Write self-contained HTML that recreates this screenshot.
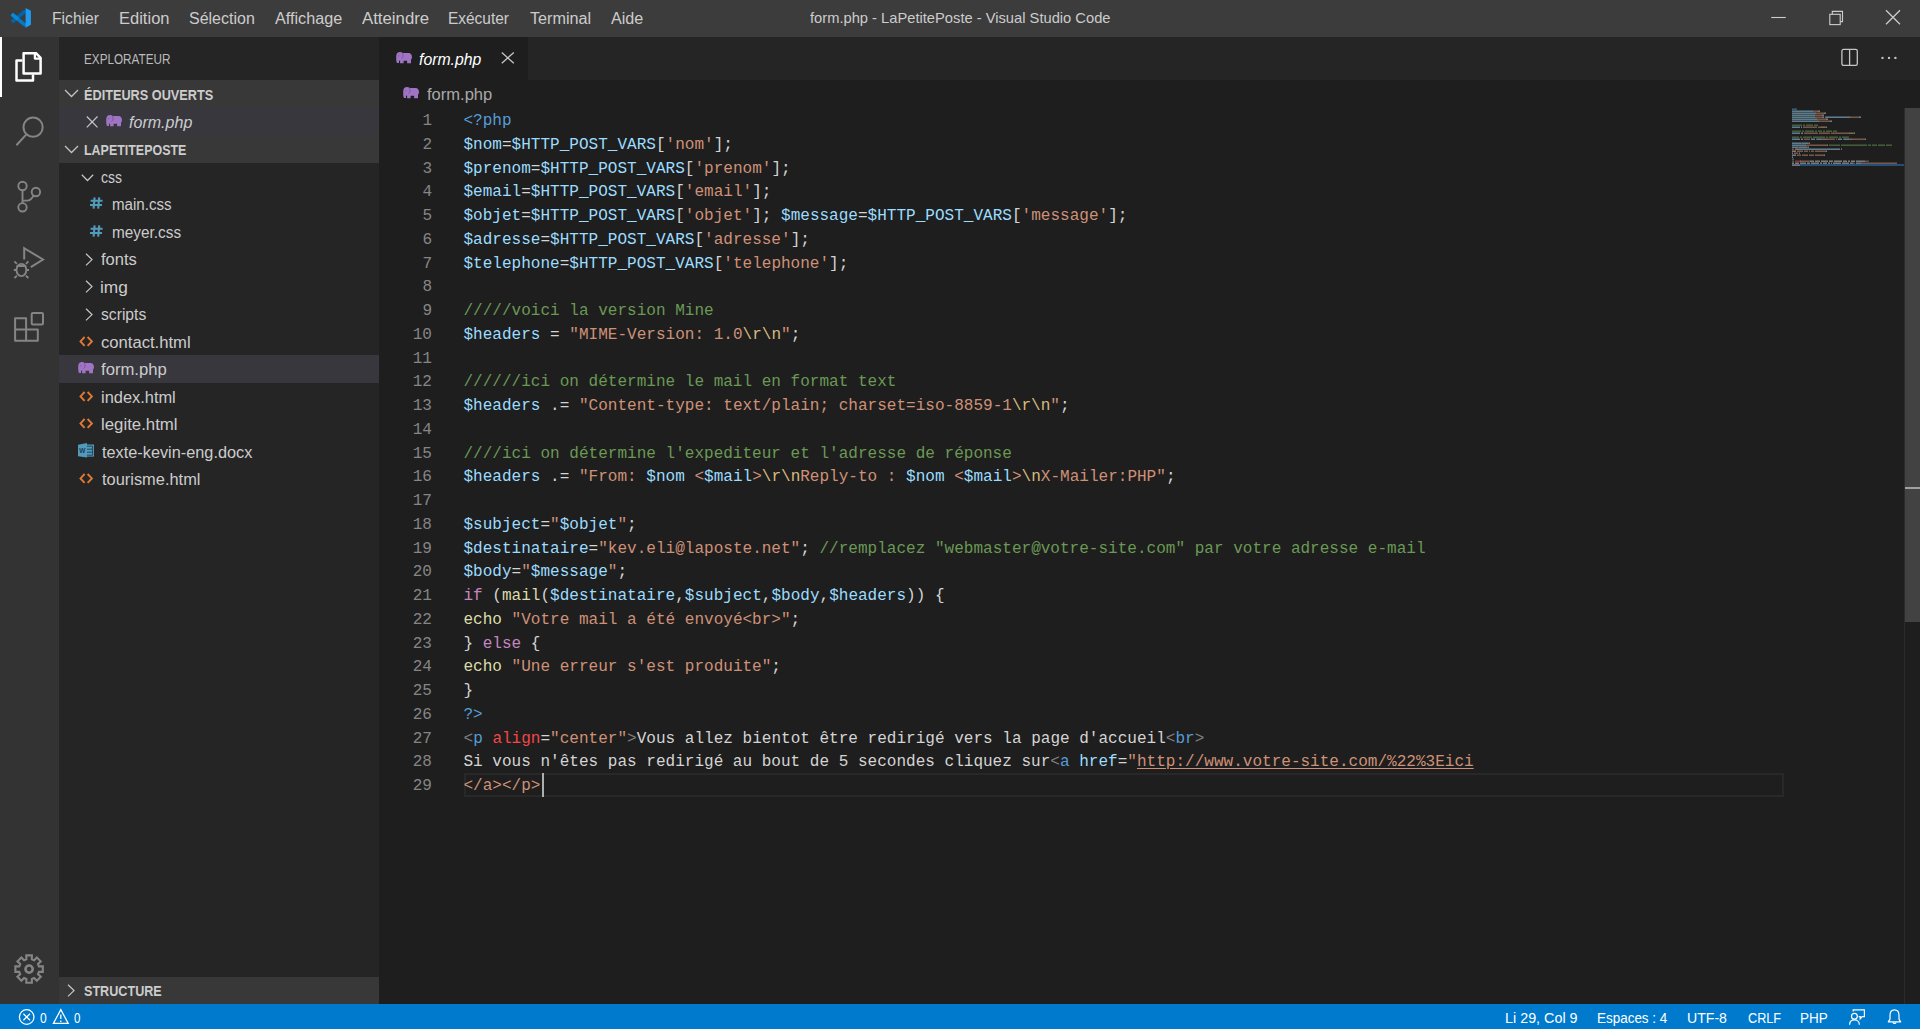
<!DOCTYPE html>
<html><head><meta charset="utf-8">
<style>
*{margin:0;padding:0;box-sizing:border-box}
html,body{width:1920px;height:1029px;overflow:hidden;background:#1e1e1e;font-family:"Liberation Sans",sans-serif}
.a{position:absolute}
.t{position:absolute;white-space:nowrap;transform-origin:0 0}
.ln{position:absolute;left:463.5px;height:23.75px;line-height:23.75px;font-family:"Liberation Mono",monospace;font-size:16.04px;white-space:pre;color:#d4d4d4}
.num{position:absolute;left:392px;width:40px;text-align:right;height:23.75px;line-height:23.75px;font-family:"Liberation Mono",monospace;font-size:16.04px;color:#858585}
</style></head><body>
<div class="a" style="left:0px;top:0px;width:1920px;height:37px;background:#3c3c3c"></div>
<div class="a" style="left:0px;top:37px;width:59px;height:967px;background:#333333"></div>
<div class="a" style="left:0px;top:37px;width:2px;height:60px;background:#ffffff"></div>
<div class="a" style="left:59px;top:37px;width:320px;height:967px;background:#252526"></div>
<div class="a" style="left:59px;top:80px;width:320px;height:27.5px;background:#383838"></div>
<div class="a" style="left:59px;top:107.5px;width:320px;height:27.5px;background:#37373d"></div>
<div class="a" style="left:59px;top:135px;width:320px;height:27.5px;background:#383838"></div>
<div class="a" style="left:59px;top:355px;width:320px;height:27.5px;background:#37373d"></div>
<div class="a" style="left:59px;top:976.5px;width:320px;height:27.5px;background:#383838"></div>
<div class="a" style="left:379px;top:37px;width:1541px;height:43px;background:#252526"></div>
<div class="a" style="left:379px;top:37px;width:149px;height:43px;background:#1e1e1e"></div>
<div class="a" style="left:0px;top:1004px;width:1920px;height:25px;background:#007acc"></div>
<div class="a" style="left:464px;top:772.75px;width:1320px;height:24.25px;border:2.5px solid #282828"></div>
<div class="a" style="left:542px;top:773px;width:2px;height:24px;background:#aeafad"></div>
<div class="a" style="left:1904px;top:108px;width:1px;height:896px;background:#2b2b2b"></div>
<div class="a" style="left:1905px;top:108px;width:15px;height:514px;background:#424242"></div>
<div class="a" style="left:1905px;top:487px;width:15px;height:2px;background:#a0a0a0"></div>
<div class="a" style="left:1792px;top:164px;width:112px;height:2px;background:#264f78"></div>
<svg class="a" style="left:0;top:0" width="40" height="37"><path d="M11.8 22 L25.6 10.9" stroke="#0065a9" stroke-width="3.6"/><path d="M11.8 14.2 L25.8 25.6" stroke="#007acc" stroke-width="3.6"/><path d="M11.8 14.2 L18 19.2" stroke="#0a8ad6" stroke-width="3.6"/><path d="M25.6 8.1 L30.9 10.8 V24.7 L25.6 27.7 Z" fill="#1f9cf0"/></svg>
<svg class="a" style="left:1760px;top:0" width="160" height="37" fill="none" stroke="#cccccc" stroke-width="1.1"><path d="M11.2 17.5 H25.8"/><rect x="69.8" y="14.3" width="10.4" height="10.3"/><path d="M72.3 14.3 V11.4 H82.5 V21.6 H80.2"/><path d="M126 10.2 L140 24.2 M140 10.2 L126 24.2" stroke-width="1.25"/></svg>
<svg class="a" style="left:0;top:0" width="59" height="360" fill="none" stroke-linejoin="round">
<path d="M23.6 53.2 H36 L40.6 57.8 V73.4 H23.6 Z" stroke="#ffffff" stroke-width="2.5"/>
<path d="M34.9 53.2 V58.6 H40.6" stroke="#ffffff" stroke-width="2.3"/>
<path d="M22.3 60.5 H16.5 V80.5 H33 V74.6" stroke="#ffffff" stroke-width="2.5"/>
<circle cx="33.1" cy="127.2" r="9.6" stroke="#858585" stroke-width="2"/>
<path d="M26.4 134.4 L16.4 145.2" stroke="#858585" stroke-width="2"/>
<circle cx="22.5" cy="186" r="4.2" stroke="#858585" stroke-width="1.9"/>
<circle cx="22.5" cy="207.3" r="4.2" stroke="#858585" stroke-width="1.9"/>
<circle cx="35.9" cy="192" r="4.2" stroke="#858585" stroke-width="1.9"/>
<path d="M22.5 190.2 V203.1 M33.5 195.6 C31.5 199.5 30 200.6 27 200.6 H22.5" stroke="#858585" stroke-width="1.9"/>
<path d="M24.2 259.5 V248.2 L43 259.5 L30.8 267.2" stroke="#858585" stroke-width="2" stroke-linejoin="miter"/>
<ellipse cx="21.4" cy="270" rx="4.9" ry="6.1" stroke="#858585" stroke-width="1.9"/>
<path d="M16.6 266 H26.2 M16.9 263.8 L14.4 261.3 M25.9 263.8 L28.4 261.3 M16.5 270 H13.8 M26.3 270 H29 M16.9 275.8 L14.4 278 M25.9 275.8 L28.4 278" stroke="#858585" stroke-width="1.8"/>
<path d="M15.1 318.2 H26.1 V329.4 H37.8 V340.7 H15.1 Z M15.1 329.4 H26.1 V340.7" stroke="#858585" stroke-width="2"/>
<rect x="31.7" y="313" width="11.3" height="11.4" rx="1.2" stroke="#858585" stroke-width="2"/>
</svg>
<svg class="a" style="left:0;top:0" width="59" height="1004" style="overflow:visible"><path d="M26.37 959.27 L26.31 955.38 L31.89 955.38 L31.83 959.27 L34.12 960.22 L36.83 957.43 L40.77 961.37 L37.98 964.08 L38.93 966.37 L42.82 966.31 L42.82 971.89 L38.93 971.83 L37.98 974.12 L40.77 976.83 L36.83 980.77 L34.12 977.98 L31.83 978.93 L31.89 982.82 L26.31 982.82 L26.37 978.93 L24.08 977.98 L21.37 980.77 L17.43 976.83 L20.22 974.12 L19.27 971.83 L15.38 971.89 L15.38 966.31 L19.27 966.37 L20.22 964.08 L17.43 961.37 L21.37 957.43 L24.08 960.22 Z" fill="none" stroke="#858585" stroke-width="2.1" stroke-linejoin="miter"/><circle cx="29.1" cy="969.1" r="3.6" fill="none" stroke="#858585" stroke-width="2.6"/></svg>
<svg class="a" style="left:64px;top:89px" width="16" height="10" viewBox="0 0 16 10"><path d="M1 1 L7.5 7.5 L14 1" stroke="#c5c5c5" stroke-width="1.25" fill="none"/></svg>
<svg class="a" style="left:85px;top:115px" width="14" height="14" viewBox="0 0 14 14"><path d="M1.8 1.5 L12.5 12.4 M12.5 1.5 L1.8 12.4" stroke="#c5c5c5" stroke-width="1.25"/></svg>
<svg class="a" style="left:105.5px;top:115.2px" width="16" height="12" viewBox="0 0 16 12"><path d="M1 11 C0.5 10 0.2 8.5 0.2 6.5 V4.2 C0.2 1.6 1.8 0 4 0 C5 0 5.8 0.3 6.4 0.8 C7.2 0.9 8 1 9 1 H12.6 C14.8 1 16 2.8 16 5 C16 6.2 15.6 7.1 15 7.6 V11.2 H11.1 V8.7 H7.6 V11.2 H4.1 V8.6 C3.6 8.5 3.2 8.7 3 9.1 V11 Z" fill="#a074c4"/><path d="M6.2 1 C7.6 2.6 7.6 5.4 5.4 6.6" stroke="#7c519c" stroke-width="0.9" fill="none"/><circle cx="2.8" cy="3.8" r="0.55" fill="#6f4a92"/></svg>
<svg class="a" style="left:64px;top:144.5px" width="16" height="10" viewBox="0 0 16 10"><path d="M1 1 L7.5 7.5 L14 1" stroke="#c5c5c5" stroke-width="1.25" fill="none"/></svg>
<svg class="a" style="left:80.5px;top:173.7px" width="16" height="10" viewBox="0 0 16 10"><path d="M0.8 0.8 L6.5 6.5 L12.2 0.8" stroke="#c5c5c5" stroke-width="1.25" fill="none"/></svg>
<svg class="a" style="left:89.8px;top:197.3px" width="14" height="14" viewBox="0 0 14 14"><path d="M4.6 0.3 L3.6 11.6 M9.2 0.3 L8.2 11.6 M0.6 3.8 H12.6 M0 8 H12" stroke="#519aba" stroke-width="2.1" fill="none"/></svg>
<svg class="a" style="left:89.8px;top:224.8px" width="14" height="14" viewBox="0 0 14 14"><path d="M4.6 0.3 L3.6 11.6 M9.2 0.3 L8.2 11.6 M0.6 3.8 H12.6 M0 8 H12" stroke="#519aba" stroke-width="2.1" fill="none"/></svg>
<svg class="a" style="left:84.5px;top:252.6px" width="10" height="16" viewBox="0 0 10 16"><path d="M1 0.8 L7 6.6 L1 12.4" stroke="#c5c5c5" stroke-width="1.25" fill="none"/></svg>
<svg class="a" style="left:84.5px;top:280.1px" width="10" height="16" viewBox="0 0 10 16"><path d="M1 0.8 L7 6.6 L1 12.4" stroke="#c5c5c5" stroke-width="1.25" fill="none"/></svg>
<svg class="a" style="left:84.5px;top:307.6px" width="10" height="16" viewBox="0 0 10 16"><path d="M1 0.8 L7 6.6 L1 12.4" stroke="#c5c5c5" stroke-width="1.25" fill="none"/></svg>
<svg class="a" style="left:79px;top:335.5px" width="16" height="14" viewBox="0 0 16 14"><path d="M5.6 1 L1.5 5.4 L5.6 9.8 M8.6 1 L12.9 5.4 L8.6 9.8" stroke="#e37933" stroke-width="1.9" fill="none"/></svg>
<svg class="a" style="left:78px;top:361.9px" width="16" height="12" viewBox="0 0 16 12"><path d="M1 11 C0.5 10 0.2 8.5 0.2 6.5 V4.2 C0.2 1.6 1.8 0 4 0 C5 0 5.8 0.3 6.4 0.8 C7.2 0.9 8 1 9 1 H12.6 C14.8 1 16 2.8 16 5 C16 6.2 15.6 7.1 15 7.6 V11.2 H11.1 V8.7 H7.6 V11.2 H4.1 V8.6 C3.6 8.5 3.2 8.7 3 9.1 V11 Z" fill="#a074c4"/><path d="M6.2 1 C7.6 2.6 7.6 5.4 5.4 6.6" stroke="#7c519c" stroke-width="0.9" fill="none"/><circle cx="2.8" cy="3.8" r="0.55" fill="#6f4a92"/></svg>
<svg class="a" style="left:79px;top:390.5px" width="16" height="14" viewBox="0 0 16 14"><path d="M5.6 1 L1.5 5.4 L5.6 9.8 M8.6 1 L12.9 5.4 L8.6 9.8" stroke="#e37933" stroke-width="1.9" fill="none"/></svg>
<svg class="a" style="left:79px;top:418.0px" width="16" height="14" viewBox="0 0 16 14"><path d="M5.6 1 L1.5 5.4 L5.6 9.8 M8.6 1 L12.9 5.4 L8.6 9.8" stroke="#e37933" stroke-width="1.9" fill="none"/></svg>
<svg class="a" style="left:78px;top:443.0px" width="17" height="16" viewBox="0 0 17 16"><rect x="9" y="1.5" width="7" height="12.1" fill="#519aba"/><path d="M9 3.2 H14.6 M9 6.2 H14.6 M9 9.2 H14.6 M9 12.2 H14.6 M14.6 3.2 V12.2" stroke="#1f3c52" stroke-width="0.9"/><path d="M0 1.7 L9 0 V14.5 L0 13.2 Z" fill="#519aba"/><text x="4.4" y="10.2" font-size="6.5" font-family="Liberation Sans" font-weight="bold" fill="#1f3c5a" text-anchor="middle">W</text></svg>
<svg class="a" style="left:79px;top:473.0px" width="16" height="14" viewBox="0 0 16 14"><path d="M5.6 1 L1.5 5.4 L5.6 9.8 M8.6 1 L12.9 5.4 L8.6 9.8" stroke="#e37933" stroke-width="1.9" fill="none"/></svg>
<svg class="a" style="left:66.6px;top:984.2px" width="10" height="16" viewBox="0 0 10 16"><path d="M1 0.8 L7 6.6 L1 12.4" stroke="#c5c5c5" stroke-width="1.25" fill="none"/></svg>
<svg class="a" style="left:395.5px;top:52.1px" width="16" height="12" viewBox="0 0 16 12"><path d="M1 11 C0.5 10 0.2 8.5 0.2 6.5 V4.2 C0.2 1.6 1.8 0 4 0 C5 0 5.8 0.3 6.4 0.8 C7.2 0.9 8 1 9 1 H12.6 C14.8 1 16 2.8 16 5 C16 6.2 15.6 7.1 15 7.6 V11.2 H11.1 V8.7 H7.6 V11.2 H4.1 V8.6 C3.6 8.5 3.2 8.7 3 9.1 V11 Z" fill="#a074c4"/><path d="M6.2 1 C7.6 2.6 7.6 5.4 5.4 6.6" stroke="#7c519c" stroke-width="0.9" fill="none"/><circle cx="2.8" cy="3.8" r="0.55" fill="#6f4a92"/></svg>
<svg class="a" style="left:500px;top:51px" width="16" height="14" viewBox="0 0 16 14"><path d="M1.8 1.5 L13.8 12.3 M13.8 1.5 L1.8 12.3" stroke="#c5c5c5" stroke-width="1.3"/></svg>
<svg class="a" style="left:1838px;top:46px" width="24" height="24" viewBox="0 0 24 24"><rect x="3.9" y="3.4" width="15.4" height="16" rx="1.6" fill="none" stroke="#c5c5c5" stroke-width="1.3"/><path d="M11.6 3.4 V19.4" stroke="#c5c5c5" stroke-width="1.3"/></svg>
<svg class="a" style="left:1878px;top:52px" width="22" height="12"><circle cx="4.5" cy="5.9" r="1.2" fill="#c5c5c5"/><circle cx="11" cy="5.9" r="1.2" fill="#c5c5c5"/><circle cx="17.4" cy="5.9" r="1.2" fill="#c5c5c5"/></svg>
<svg class="a" style="left:403px;top:87.3px" width="16" height="12" viewBox="0 0 16 12"><path d="M1 11 C0.5 10 0.2 8.5 0.2 6.5 V4.2 C0.2 1.6 1.8 0 4 0 C5 0 5.8 0.3 6.4 0.8 C7.2 0.9 8 1 9 1 H12.6 C14.8 1 16 2.8 16 5 C16 6.2 15.6 7.1 15 7.6 V11.2 H11.1 V8.7 H7.6 V11.2 H4.1 V8.6 C3.6 8.5 3.2 8.7 3 9.1 V11 Z" fill="#a074c4"/><path d="M6.2 1 C7.6 2.6 7.6 5.4 5.4 6.6" stroke="#7c519c" stroke-width="0.9" fill="none"/><circle cx="2.8" cy="3.8" r="0.55" fill="#6f4a92"/></svg>
<svg class="a" style="left:0;top:1004px" width="90" height="25" fill="none" stroke="#fff" stroke-width="1.25"><circle cx="26.7" cy="13" r="7.3"/><path d="M23.4 9.7 L30 16.3 M30 9.7 L23.4 16.3"/><path d="M60.8 5.6 L68.2 19.4 H53.4 Z" stroke-linejoin="miter"/><path d="M60.8 10.4 V15 M60.8 16.4 V18" stroke-width="1.3"/></svg>
<svg class="a" style="left:1840px;top:1004px" width="70" height="25" fill="none" stroke="#fff" stroke-width="1.2"><path d="M13.2 7.6 V5.8 H24.4 V12.6 H22.1 L20.2 14.8 V12.6 H18.6"/><circle cx="14.4" cy="12.2" r="2.9"/><path d="M9.6 20.8 C9.6 17.6 11.8 15.9 14.4 15.9 C17 15.9 19.4 17.6 19.4 20.8"/><path d="M54.5 5.8 C51.2 5.8 50 8.5 50 11.5 V15.2 L48.3 17.8 H60.7 L59 15.2 V11.5 C59 8.5 57.8 5.8 54.5 5.8 Z" stroke-linejoin="round"/><path d="M53 18.4 C53.2 19.8 55.8 19.8 56 18.4"/></svg>
<div class="t" style="left:51.90px;top:0.00px;height:37px;line-height:37px;font-size:15.8px;font-weight:400;color:#cccccc;transform:scaleX(0.9919)">Fichier</div>
<div class="t" style="left:119.10px;top:0.00px;height:37px;line-height:37px;font-size:15.8px;font-weight:400;color:#cccccc;transform:scaleX(1.0454)">Edition</div>
<div class="t" style="left:188.90px;top:0.00px;height:37px;line-height:37px;font-size:15.8px;font-weight:400;color:#cccccc;transform:scaleX(1.0125)">Sélection</div>
<div class="t" style="left:274.90px;top:0.00px;height:37px;line-height:37px;font-size:15.8px;font-weight:400;color:#cccccc;transform:scaleX(1.0260)">Affichage</div>
<div class="t" style="left:361.90px;top:0.00px;height:37px;line-height:37px;font-size:15.8px;font-weight:400;color:#cccccc;transform:scaleX(1.0615)">Atteindre</div>
<div class="t" style="left:448.30px;top:0.00px;height:37px;line-height:37px;font-size:15.8px;font-weight:400;color:#cccccc;transform:scaleX(0.9776)">Exécuter</div>
<div class="t" style="left:530.30px;top:0.00px;height:37px;line-height:37px;font-size:15.8px;font-weight:400;color:#cccccc;transform:scaleX(1.0247)">Terminal</div>
<div class="t" style="left:611.30px;top:0.00px;height:37px;line-height:37px;font-size:15.8px;font-weight:400;color:#cccccc;transform:scaleX(1.0227)">Aide</div>
<div class="t" style="left:809.50px;top:0.00px;height:37px;line-height:37px;font-size:14.8px;font-weight:400;color:#cccccc;transform:scaleX(0.9937)">form.php - LaPetitePoste - Visual Studio Code</div>
<div class="t" style="left:84.30px;top:38.00px;height:43px;line-height:43px;font-size:13.75px;font-weight:400;color:#bbbbbb;transform:scaleX(0.8522)">EXPLORATEUR</div>
<div class="t" style="left:84.30px;top:82.00px;height:27.5px;line-height:27.5px;font-size:13.75px;font-weight:700;color:#cccccc;transform:scaleX(0.9245)">ÉDITEURS OUVERTS</div>
<div class="t" style="left:128.90px;top:108.50px;height:27.5px;line-height:27.5px;font-size:15.8px;font-weight:400;color:#cccccc;transform:scaleX(1.0161);font-style:italic">form.php</div>
<div class="t" style="left:84.30px;top:137.00px;height:27.5px;line-height:27.5px;font-size:13.75px;font-weight:700;color:#cccccc;transform:scaleX(0.9050)">LAPETITEPOSTE</div>
<div class="t" style="left:101.30px;top:163.50px;height:27.5px;line-height:27.5px;font-size:15.8px;font-weight:400;color:#cccccc;transform:scaleX(0.8843)">css</div>
<div class="t" style="left:111.70px;top:191.00px;height:27.5px;line-height:27.5px;font-size:15.8px;font-weight:400;color:#cccccc;transform:scaleX(0.9567)">main.css</div>
<div class="t" style="left:111.70px;top:218.50px;height:27.5px;line-height:27.5px;font-size:15.8px;font-weight:400;color:#cccccc;transform:scaleX(0.9716)">meyer.css</div>
<div class="t" style="left:101.30px;top:246.00px;height:27.5px;line-height:27.5px;font-size:15.8px;font-weight:400;color:#cccccc;transform:scaleX(1.0471)">fonts</div>
<div class="t" style="left:100.30px;top:273.50px;height:27.5px;line-height:27.5px;font-size:15.8px;font-weight:400;color:#cccccc;transform:scaleX(1.0937)">img</div>
<div class="t" style="left:101.30px;top:301.00px;height:27.5px;line-height:27.5px;font-size:15.8px;font-weight:400;color:#cccccc;transform:scaleX(0.9919)">scripts</div>
<div class="t" style="left:101.30px;top:328.50px;height:27.5px;line-height:27.5px;font-size:15.8px;font-weight:400;color:#cccccc;transform:scaleX(1.0526)">contact.html</div>
<div class="t" style="left:101.30px;top:356.00px;height:27.5px;line-height:27.5px;font-size:15.8px;font-weight:400;color:#cccccc;transform:scaleX(1.0544)">form.php</div>
<div class="t" style="left:101.30px;top:383.50px;height:27.5px;line-height:27.5px;font-size:15.8px;font-weight:400;color:#cccccc;transform:scaleX(1.0382)">index.html</div>
<div class="t" style="left:101.30px;top:411.00px;height:27.5px;line-height:27.5px;font-size:15.8px;font-weight:400;color:#cccccc;transform:scaleX(1.0634)">legite.html</div>
<div class="t" style="left:102.10px;top:438.50px;height:27.5px;line-height:27.5px;font-size:15.8px;font-weight:400;color:#cccccc;transform:scaleX(1.0313)">texte-kevin-eng.docx</div>
<div class="t" style="left:102.10px;top:466.00px;height:27.5px;line-height:27.5px;font-size:15.8px;font-weight:400;color:#cccccc;transform:scaleX(1.0385)">tourisme.html</div>
<div class="t" style="left:83.50px;top:978.00px;height:27.5px;line-height:27.5px;font-size:13.75px;font-weight:700;color:#cccccc;transform:scaleX(0.9172)">STRUCTURE</div>
<div class="t" style="left:418.90px;top:38.00px;height:43px;line-height:43px;font-size:15.8px;font-weight:400;color:#ffffff;transform:scaleX(1.0002);font-style:italic">form.php</div>
<div class="t" style="left:426.90px;top:81.00px;height:28px;line-height:28px;font-size:15.8px;font-weight:400;color:#a9a9a9;transform:scaleX(1.0468)">form.php</div>
<div class="t" style="left:39.50px;top:1004.80px;height:25px;line-height:25px;font-size:15.2px;font-weight:400;color:#ffffff;transform:scaleX(0.7894)">0</div>
<div class="t" style="left:73.50px;top:1004.80px;height:25px;line-height:25px;font-size:15.2px;font-weight:400;color:#ffffff;transform:scaleX(0.7556)">0</div>
<div class="t" style="left:1504.90px;top:1004.80px;height:25px;line-height:25px;font-size:15.2px;font-weight:400;color:#ffffff;transform:scaleX(0.9444)">Li 29, Col 9</div>
<div class="t" style="left:1596.50px;top:1004.80px;height:25px;line-height:25px;font-size:15.2px;font-weight:400;color:#ffffff;transform:scaleX(0.8858)">Espaces : 4</div>
<div class="t" style="left:1686.50px;top:1004.80px;height:25px;line-height:25px;font-size:15.2px;font-weight:400;color:#ffffff;transform:scaleX(0.9289)">UTF-8</div>
<div class="t" style="left:1747.50px;top:1004.80px;height:25px;line-height:25px;font-size:15.2px;font-weight:400;color:#ffffff;transform:scaleX(0.8351)">CRLF</div>
<div class="t" style="left:1799.50px;top:1004.80px;height:25px;line-height:25px;font-size:15.2px;font-weight:400;color:#ffffff;transform:scaleX(0.8882)">PHP</div>
<div class="num" style="top:110.00px">1</div>
<div class="num" style="top:133.75px">2</div>
<div class="num" style="top:157.50px">3</div>
<div class="num" style="top:181.25px">4</div>
<div class="num" style="top:205.00px">5</div>
<div class="num" style="top:228.75px">6</div>
<div class="num" style="top:252.50px">7</div>
<div class="num" style="top:276.25px">8</div>
<div class="num" style="top:300.00px">9</div>
<div class="num" style="top:323.75px">10</div>
<div class="num" style="top:347.50px">11</div>
<div class="num" style="top:371.25px">12</div>
<div class="num" style="top:395.00px">13</div>
<div class="num" style="top:418.75px">14</div>
<div class="num" style="top:442.50px">15</div>
<div class="num" style="top:466.25px">16</div>
<div class="num" style="top:490.00px">17</div>
<div class="num" style="top:513.75px">18</div>
<div class="num" style="top:537.50px">19</div>
<div class="num" style="top:561.25px">20</div>
<div class="num" style="top:585.00px">21</div>
<div class="num" style="top:608.75px">22</div>
<div class="num" style="top:632.50px">23</div>
<div class="num" style="top:656.25px">24</div>
<div class="num" style="top:680.00px">25</div>
<div class="num" style="top:703.75px">26</div>
<div class="num" style="top:727.50px">27</div>
<div class="num" style="top:751.25px">28</div>
<div class="num" style="top:775.00px">29</div>
<div class="ln" style="top:110.00px"><span style="color:#569cd6">&lt;?php</span></div>
<div class="ln" style="top:133.75px"><span style="color:#9cdcfe">$nom</span><span style="color:#d4d4d4">=</span><span style="color:#9cdcfe">$HTTP_POST_VARS</span><span style="color:#d4d4d4">[</span><span style="color:#ce9178">&#x27;nom&#x27;</span><span style="color:#d4d4d4">];</span></div>
<div class="ln" style="top:157.50px"><span style="color:#9cdcfe">$prenom</span><span style="color:#d4d4d4">=</span><span style="color:#9cdcfe">$HTTP_POST_VARS</span><span style="color:#d4d4d4">[</span><span style="color:#ce9178">&#x27;prenom&#x27;</span><span style="color:#d4d4d4">];</span></div>
<div class="ln" style="top:181.25px"><span style="color:#9cdcfe">$email</span><span style="color:#d4d4d4">=</span><span style="color:#9cdcfe">$HTTP_POST_VARS</span><span style="color:#d4d4d4">[</span><span style="color:#ce9178">&#x27;email&#x27;</span><span style="color:#d4d4d4">];</span></div>
<div class="ln" style="top:205.00px"><span style="color:#9cdcfe">$objet</span><span style="color:#d4d4d4">=</span><span style="color:#9cdcfe">$HTTP_POST_VARS</span><span style="color:#d4d4d4">[</span><span style="color:#ce9178">&#x27;objet&#x27;</span><span style="color:#d4d4d4">];</span><span style="color:#d4d4d4"> </span><span style="color:#9cdcfe">$message</span><span style="color:#d4d4d4">=</span><span style="color:#9cdcfe">$HTTP_POST_VARS</span><span style="color:#d4d4d4">[</span><span style="color:#ce9178">&#x27;message&#x27;</span><span style="color:#d4d4d4">];</span></div>
<div class="ln" style="top:228.75px"><span style="color:#9cdcfe">$adresse</span><span style="color:#d4d4d4">=</span><span style="color:#9cdcfe">$HTTP_POST_VARS</span><span style="color:#d4d4d4">[</span><span style="color:#ce9178">&#x27;adresse&#x27;</span><span style="color:#d4d4d4">];</span></div>
<div class="ln" style="top:252.50px"><span style="color:#9cdcfe">$telephone</span><span style="color:#d4d4d4">=</span><span style="color:#9cdcfe">$HTTP_POST_VARS</span><span style="color:#d4d4d4">[</span><span style="color:#ce9178">&#x27;telephone&#x27;</span><span style="color:#d4d4d4">];</span></div>
<div class="ln" style="top:276.25px"></div>
<div class="ln" style="top:300.00px"><span style="color:#6a9955">/////voici la version Mine</span></div>
<div class="ln" style="top:323.75px"><span style="color:#9cdcfe">$headers</span><span style="color:#d4d4d4"> = </span><span style="color:#ce9178">&quot;MIME-Version: 1.0</span><span style="color:#d7ba7d">\r\n</span><span style="color:#ce9178">&quot;</span><span style="color:#d4d4d4">;</span></div>
<div class="ln" style="top:347.50px"></div>
<div class="ln" style="top:371.25px"><span style="color:#6a9955">//////ici on détermine le mail en format text</span></div>
<div class="ln" style="top:395.00px"><span style="color:#9cdcfe">$headers</span><span style="color:#d4d4d4"> .= </span><span style="color:#ce9178">&quot;Content-type: text/plain; charset=iso-8859-1</span><span style="color:#d7ba7d">\r\n</span><span style="color:#ce9178">&quot;</span><span style="color:#d4d4d4">;</span></div>
<div class="ln" style="top:418.75px"></div>
<div class="ln" style="top:442.50px"><span style="color:#6a9955">////ici on détermine l&#x27;expediteur et l&#x27;adresse de réponse</span></div>
<div class="ln" style="top:466.25px"><span style="color:#9cdcfe">$headers</span><span style="color:#d4d4d4"> .= </span><span style="color:#ce9178">&quot;From: </span><span style="color:#9cdcfe">$nom</span><span style="color:#ce9178"> &lt;</span><span style="color:#9cdcfe">$mail</span><span style="color:#ce9178">&gt;</span><span style="color:#d7ba7d">\r\n</span><span style="color:#ce9178">Reply-to : </span><span style="color:#9cdcfe">$nom</span><span style="color:#ce9178"> &lt;</span><span style="color:#9cdcfe">$mail</span><span style="color:#ce9178">&gt;</span><span style="color:#d7ba7d">\n</span><span style="color:#ce9178">X-Mailer:PHP&quot;</span><span style="color:#d4d4d4">;</span></div>
<div class="ln" style="top:490.00px"></div>
<div class="ln" style="top:513.75px"><span style="color:#9cdcfe">$subject</span><span style="color:#d4d4d4">=</span><span style="color:#ce9178">&quot;</span><span style="color:#9cdcfe">$objet</span><span style="color:#ce9178">&quot;</span><span style="color:#d4d4d4">;</span></div>
<div class="ln" style="top:537.50px"><span style="color:#9cdcfe">$destinataire</span><span style="color:#d4d4d4">=</span><span style="color:#ce9178">&quot;kev.eli@laposte.net&quot;</span><span style="color:#d4d4d4">; </span><span style="color:#6a9955">//remplacez &quot;webmaster@votre-site.com&quot; par votre adresse e-mail</span></div>
<div class="ln" style="top:561.25px"><span style="color:#9cdcfe">$body</span><span style="color:#d4d4d4">=</span><span style="color:#ce9178">&quot;</span><span style="color:#9cdcfe">$message</span><span style="color:#ce9178">&quot;</span><span style="color:#d4d4d4">;</span></div>
<div class="ln" style="top:585.00px"><span style="color:#c586c0">if</span><span style="color:#d4d4d4"> (</span><span style="color:#dcdcaa">mail</span><span style="color:#d4d4d4">(</span><span style="color:#9cdcfe">$destinataire</span><span style="color:#d4d4d4">,</span><span style="color:#9cdcfe">$subject</span><span style="color:#d4d4d4">,</span><span style="color:#9cdcfe">$body</span><span style="color:#d4d4d4">,</span><span style="color:#9cdcfe">$headers</span><span style="color:#d4d4d4">)) {</span></div>
<div class="ln" style="top:608.75px"><span style="color:#dcdcaa">echo</span><span style="color:#d4d4d4"> </span><span style="color:#ce9178">&quot;Votre mail a été envoyé&lt;br&gt;&quot;</span><span style="color:#d4d4d4">;</span></div>
<div class="ln" style="top:632.50px"><span style="color:#d4d4d4">} </span><span style="color:#c586c0">else</span><span style="color:#d4d4d4"> {</span></div>
<div class="ln" style="top:656.25px"><span style="color:#dcdcaa">echo</span><span style="color:#d4d4d4"> </span><span style="color:#ce9178">&quot;Une erreur s&#x27;est produite&quot;</span><span style="color:#d4d4d4">;</span></div>
<div class="ln" style="top:680.00px"><span style="color:#d4d4d4">}</span></div>
<div class="ln" style="top:703.75px"><span style="color:#569cd6">?&gt;</span></div>
<div class="ln" style="top:727.50px"><span style="color:#808080">&lt;</span><span style="color:#569cd6">p</span><span style="color:#d4d4d4"> </span><span style="color:#f44747">align</span><span style="color:#d4d4d4">=</span><span style="color:#ce9178">&quot;center&quot;</span><span style="color:#808080">&gt;</span><span style="color:#d4d4d4">Vous allez bientot être redirigé vers la page d&#x27;accueil</span><span style="color:#808080">&lt;</span><span style="color:#569cd6">br</span><span style="color:#808080">&gt;</span></div>
<div class="ln" style="top:751.25px"><span style="color:#d4d4d4">Si vous n&#x27;êtes pas redirigé au bout de 5 secondes cliquez sur</span><span style="color:#808080">&lt;</span><span style="color:#569cd6">a</span><span style="color:#d4d4d4"> </span><span style="color:#9cdcfe">href</span><span style="color:#d4d4d4">=</span><span style="color:#ce9178">&quot;</span><span style="color:#ce9178;text-decoration:underline;text-underline-offset:2px">http://www.votre-site.com/%22%3Eici</span></div>
<div class="ln" style="top:775.00px"><span style="color:#ce9178">&lt;/a&gt;&lt;/p&gt;</span></div>
<svg class="a" style="left:1792px;top:108px" width="112" height="60" shape-rendering="crispEdges"><rect x="0" y="0" width="5" height="1" fill="#569cd6" fill-opacity="0.28"/><rect x="0" y="1" width="5" height="1" fill="#569cd6" fill-opacity="0.5"/><rect x="0" y="2" width="4" height="1" fill="#9cdcfe" fill-opacity="0.28"/><rect x="0" y="3" width="4" height="1" fill="#9cdcfe" fill-opacity="0.5"/><rect x="4" y="2" width="1" height="1" fill="#d4d4d4" fill-opacity="0.28"/><rect x="4" y="3" width="1" height="1" fill="#d4d4d4" fill-opacity="0.5"/><rect x="5" y="2" width="15" height="1" fill="#9cdcfe" fill-opacity="0.28"/><rect x="5" y="3" width="15" height="1" fill="#9cdcfe" fill-opacity="0.5"/><rect x="20" y="2" width="1" height="1" fill="#d4d4d4" fill-opacity="0.28"/><rect x="20" y="3" width="1" height="1" fill="#d4d4d4" fill-opacity="0.5"/><rect x="21" y="2" width="5" height="1" fill="#ce9178" fill-opacity="0.28"/><rect x="21" y="3" width="5" height="1" fill="#ce9178" fill-opacity="0.5"/><rect x="26" y="2" width="2" height="1" fill="#d4d4d4" fill-opacity="0.28"/><rect x="26" y="3" width="2" height="1" fill="#d4d4d4" fill-opacity="0.5"/><rect x="0" y="4" width="7" height="1" fill="#9cdcfe" fill-opacity="0.28"/><rect x="0" y="5" width="7" height="1" fill="#9cdcfe" fill-opacity="0.5"/><rect x="7" y="4" width="1" height="1" fill="#d4d4d4" fill-opacity="0.28"/><rect x="7" y="5" width="1" height="1" fill="#d4d4d4" fill-opacity="0.5"/><rect x="8" y="4" width="15" height="1" fill="#9cdcfe" fill-opacity="0.28"/><rect x="8" y="5" width="15" height="1" fill="#9cdcfe" fill-opacity="0.5"/><rect x="23" y="4" width="1" height="1" fill="#d4d4d4" fill-opacity="0.28"/><rect x="23" y="5" width="1" height="1" fill="#d4d4d4" fill-opacity="0.5"/><rect x="24" y="4" width="8" height="1" fill="#ce9178" fill-opacity="0.28"/><rect x="24" y="5" width="8" height="1" fill="#ce9178" fill-opacity="0.5"/><rect x="32" y="4" width="2" height="1" fill="#d4d4d4" fill-opacity="0.28"/><rect x="32" y="5" width="2" height="1" fill="#d4d4d4" fill-opacity="0.5"/><rect x="0" y="6" width="6" height="1" fill="#9cdcfe" fill-opacity="0.28"/><rect x="0" y="7" width="6" height="1" fill="#9cdcfe" fill-opacity="0.5"/><rect x="6" y="6" width="1" height="1" fill="#d4d4d4" fill-opacity="0.28"/><rect x="6" y="7" width="1" height="1" fill="#d4d4d4" fill-opacity="0.5"/><rect x="7" y="6" width="15" height="1" fill="#9cdcfe" fill-opacity="0.28"/><rect x="7" y="7" width="15" height="1" fill="#9cdcfe" fill-opacity="0.5"/><rect x="22" y="6" width="1" height="1" fill="#d4d4d4" fill-opacity="0.28"/><rect x="22" y="7" width="1" height="1" fill="#d4d4d4" fill-opacity="0.5"/><rect x="23" y="6" width="7" height="1" fill="#ce9178" fill-opacity="0.28"/><rect x="23" y="7" width="7" height="1" fill="#ce9178" fill-opacity="0.5"/><rect x="30" y="6" width="2" height="1" fill="#d4d4d4" fill-opacity="0.28"/><rect x="30" y="7" width="2" height="1" fill="#d4d4d4" fill-opacity="0.5"/><rect x="0" y="8" width="6" height="1" fill="#9cdcfe" fill-opacity="0.28"/><rect x="0" y="9" width="6" height="1" fill="#9cdcfe" fill-opacity="0.5"/><rect x="6" y="8" width="1" height="1" fill="#d4d4d4" fill-opacity="0.28"/><rect x="6" y="9" width="1" height="1" fill="#d4d4d4" fill-opacity="0.5"/><rect x="7" y="8" width="15" height="1" fill="#9cdcfe" fill-opacity="0.28"/><rect x="7" y="9" width="15" height="1" fill="#9cdcfe" fill-opacity="0.5"/><rect x="22" y="8" width="1" height="1" fill="#d4d4d4" fill-opacity="0.28"/><rect x="22" y="9" width="1" height="1" fill="#d4d4d4" fill-opacity="0.5"/><rect x="23" y="8" width="7" height="1" fill="#ce9178" fill-opacity="0.28"/><rect x="23" y="9" width="7" height="1" fill="#ce9178" fill-opacity="0.5"/><rect x="30" y="8" width="2" height="1" fill="#d4d4d4" fill-opacity="0.28"/><rect x="30" y="9" width="2" height="1" fill="#d4d4d4" fill-opacity="0.5"/><rect x="33" y="8" width="8" height="1" fill="#9cdcfe" fill-opacity="0.28"/><rect x="33" y="9" width="8" height="1" fill="#9cdcfe" fill-opacity="0.5"/><rect x="41" y="8" width="1" height="1" fill="#d4d4d4" fill-opacity="0.28"/><rect x="41" y="9" width="1" height="1" fill="#d4d4d4" fill-opacity="0.5"/><rect x="42" y="8" width="15" height="1" fill="#9cdcfe" fill-opacity="0.28"/><rect x="42" y="9" width="15" height="1" fill="#9cdcfe" fill-opacity="0.5"/><rect x="57" y="8" width="1" height="1" fill="#d4d4d4" fill-opacity="0.28"/><rect x="57" y="9" width="1" height="1" fill="#d4d4d4" fill-opacity="0.5"/><rect x="58" y="8" width="9" height="1" fill="#ce9178" fill-opacity="0.28"/><rect x="58" y="9" width="9" height="1" fill="#ce9178" fill-opacity="0.5"/><rect x="67" y="8" width="2" height="1" fill="#d4d4d4" fill-opacity="0.28"/><rect x="67" y="9" width="2" height="1" fill="#d4d4d4" fill-opacity="0.5"/><rect x="0" y="10" width="8" height="1" fill="#9cdcfe" fill-opacity="0.28"/><rect x="0" y="11" width="8" height="1" fill="#9cdcfe" fill-opacity="0.5"/><rect x="8" y="10" width="1" height="1" fill="#d4d4d4" fill-opacity="0.28"/><rect x="8" y="11" width="1" height="1" fill="#d4d4d4" fill-opacity="0.5"/><rect x="9" y="10" width="15" height="1" fill="#9cdcfe" fill-opacity="0.28"/><rect x="9" y="11" width="15" height="1" fill="#9cdcfe" fill-opacity="0.5"/><rect x="24" y="10" width="1" height="1" fill="#d4d4d4" fill-opacity="0.28"/><rect x="24" y="11" width="1" height="1" fill="#d4d4d4" fill-opacity="0.5"/><rect x="25" y="10" width="9" height="1" fill="#ce9178" fill-opacity="0.28"/><rect x="25" y="11" width="9" height="1" fill="#ce9178" fill-opacity="0.5"/><rect x="34" y="10" width="2" height="1" fill="#d4d4d4" fill-opacity="0.28"/><rect x="34" y="11" width="2" height="1" fill="#d4d4d4" fill-opacity="0.5"/><rect x="0" y="12" width="10" height="1" fill="#9cdcfe" fill-opacity="0.28"/><rect x="0" y="13" width="10" height="1" fill="#9cdcfe" fill-opacity="0.5"/><rect x="10" y="12" width="1" height="1" fill="#d4d4d4" fill-opacity="0.28"/><rect x="10" y="13" width="1" height="1" fill="#d4d4d4" fill-opacity="0.5"/><rect x="11" y="12" width="15" height="1" fill="#9cdcfe" fill-opacity="0.28"/><rect x="11" y="13" width="15" height="1" fill="#9cdcfe" fill-opacity="0.5"/><rect x="26" y="12" width="1" height="1" fill="#d4d4d4" fill-opacity="0.28"/><rect x="26" y="13" width="1" height="1" fill="#d4d4d4" fill-opacity="0.5"/><rect x="27" y="12" width="11" height="1" fill="#ce9178" fill-opacity="0.28"/><rect x="27" y="13" width="11" height="1" fill="#ce9178" fill-opacity="0.5"/><rect x="38" y="12" width="2" height="1" fill="#d4d4d4" fill-opacity="0.28"/><rect x="38" y="13" width="2" height="1" fill="#d4d4d4" fill-opacity="0.5"/><rect x="0" y="16" width="10" height="1" fill="#6a9955" fill-opacity="0.28"/><rect x="0" y="17" width="10" height="1" fill="#6a9955" fill-opacity="0.5"/><rect x="11" y="16" width="2" height="1" fill="#6a9955" fill-opacity="0.28"/><rect x="11" y="17" width="2" height="1" fill="#6a9955" fill-opacity="0.5"/><rect x="14" y="16" width="7" height="1" fill="#6a9955" fill-opacity="0.28"/><rect x="14" y="17" width="7" height="1" fill="#6a9955" fill-opacity="0.5"/><rect x="22" y="16" width="4" height="1" fill="#6a9955" fill-opacity="0.28"/><rect x="22" y="17" width="4" height="1" fill="#6a9955" fill-opacity="0.5"/><rect x="0" y="18" width="8" height="1" fill="#9cdcfe" fill-opacity="0.28"/><rect x="0" y="19" width="8" height="1" fill="#9cdcfe" fill-opacity="0.5"/><rect x="9" y="18" width="1" height="1" fill="#d4d4d4" fill-opacity="0.28"/><rect x="9" y="19" width="1" height="1" fill="#d4d4d4" fill-opacity="0.5"/><rect x="11" y="18" width="14" height="1" fill="#ce9178" fill-opacity="0.28"/><rect x="11" y="19" width="14" height="1" fill="#ce9178" fill-opacity="0.5"/><rect x="26" y="18" width="3" height="1" fill="#ce9178" fill-opacity="0.28"/><rect x="26" y="19" width="3" height="1" fill="#ce9178" fill-opacity="0.5"/><rect x="29" y="18" width="4" height="1" fill="#d7ba7d" fill-opacity="0.28"/><rect x="29" y="19" width="4" height="1" fill="#d7ba7d" fill-opacity="0.5"/><rect x="33" y="18" width="1" height="1" fill="#ce9178" fill-opacity="0.28"/><rect x="33" y="19" width="1" height="1" fill="#ce9178" fill-opacity="0.5"/><rect x="34" y="18" width="1" height="1" fill="#d4d4d4" fill-opacity="0.28"/><rect x="34" y="19" width="1" height="1" fill="#d4d4d4" fill-opacity="0.5"/><rect x="0" y="22" width="9" height="1" fill="#6a9955" fill-opacity="0.28"/><rect x="0" y="23" width="9" height="1" fill="#6a9955" fill-opacity="0.5"/><rect x="10" y="22" width="2" height="1" fill="#6a9955" fill-opacity="0.28"/><rect x="10" y="23" width="2" height="1" fill="#6a9955" fill-opacity="0.5"/><rect x="13" y="22" width="9" height="1" fill="#6a9955" fill-opacity="0.28"/><rect x="13" y="23" width="9" height="1" fill="#6a9955" fill-opacity="0.5"/><rect x="23" y="22" width="2" height="1" fill="#6a9955" fill-opacity="0.28"/><rect x="23" y="23" width="2" height="1" fill="#6a9955" fill-opacity="0.5"/><rect x="26" y="22" width="4" height="1" fill="#6a9955" fill-opacity="0.28"/><rect x="26" y="23" width="4" height="1" fill="#6a9955" fill-opacity="0.5"/><rect x="31" y="22" width="2" height="1" fill="#6a9955" fill-opacity="0.28"/><rect x="31" y="23" width="2" height="1" fill="#6a9955" fill-opacity="0.5"/><rect x="34" y="22" width="6" height="1" fill="#6a9955" fill-opacity="0.28"/><rect x="34" y="23" width="6" height="1" fill="#6a9955" fill-opacity="0.5"/><rect x="41" y="22" width="4" height="1" fill="#6a9955" fill-opacity="0.28"/><rect x="41" y="23" width="4" height="1" fill="#6a9955" fill-opacity="0.5"/><rect x="0" y="24" width="8" height="1" fill="#9cdcfe" fill-opacity="0.28"/><rect x="0" y="25" width="8" height="1" fill="#9cdcfe" fill-opacity="0.5"/><rect x="9" y="24" width="2" height="1" fill="#d4d4d4" fill-opacity="0.28"/><rect x="9" y="25" width="2" height="1" fill="#d4d4d4" fill-opacity="0.5"/><rect x="12" y="24" width="14" height="1" fill="#ce9178" fill-opacity="0.28"/><rect x="12" y="25" width="14" height="1" fill="#ce9178" fill-opacity="0.5"/><rect x="27" y="24" width="11" height="1" fill="#ce9178" fill-opacity="0.28"/><rect x="27" y="25" width="11" height="1" fill="#ce9178" fill-opacity="0.5"/><rect x="39" y="24" width="18" height="1" fill="#ce9178" fill-opacity="0.28"/><rect x="39" y="25" width="18" height="1" fill="#ce9178" fill-opacity="0.5"/><rect x="57" y="24" width="4" height="1" fill="#d7ba7d" fill-opacity="0.28"/><rect x="57" y="25" width="4" height="1" fill="#d7ba7d" fill-opacity="0.5"/><rect x="61" y="24" width="1" height="1" fill="#ce9178" fill-opacity="0.28"/><rect x="61" y="25" width="1" height="1" fill="#ce9178" fill-opacity="0.5"/><rect x="62" y="24" width="1" height="1" fill="#d4d4d4" fill-opacity="0.28"/><rect x="62" y="25" width="1" height="1" fill="#d4d4d4" fill-opacity="0.5"/><rect x="0" y="28" width="7" height="1" fill="#6a9955" fill-opacity="0.28"/><rect x="0" y="29" width="7" height="1" fill="#6a9955" fill-opacity="0.5"/><rect x="8" y="28" width="2" height="1" fill="#6a9955" fill-opacity="0.28"/><rect x="8" y="29" width="2" height="1" fill="#6a9955" fill-opacity="0.5"/><rect x="11" y="28" width="9" height="1" fill="#6a9955" fill-opacity="0.28"/><rect x="11" y="29" width="9" height="1" fill="#6a9955" fill-opacity="0.5"/><rect x="21" y="28" width="12" height="1" fill="#6a9955" fill-opacity="0.28"/><rect x="21" y="29" width="12" height="1" fill="#6a9955" fill-opacity="0.5"/><rect x="34" y="28" width="2" height="1" fill="#6a9955" fill-opacity="0.28"/><rect x="34" y="29" width="2" height="1" fill="#6a9955" fill-opacity="0.5"/><rect x="37" y="28" width="9" height="1" fill="#6a9955" fill-opacity="0.28"/><rect x="37" y="29" width="9" height="1" fill="#6a9955" fill-opacity="0.5"/><rect x="47" y="28" width="2" height="1" fill="#6a9955" fill-opacity="0.28"/><rect x="47" y="29" width="2" height="1" fill="#6a9955" fill-opacity="0.5"/><rect x="50" y="28" width="7" height="1" fill="#6a9955" fill-opacity="0.28"/><rect x="50" y="29" width="7" height="1" fill="#6a9955" fill-opacity="0.5"/><rect x="0" y="30" width="8" height="1" fill="#9cdcfe" fill-opacity="0.28"/><rect x="0" y="31" width="8" height="1" fill="#9cdcfe" fill-opacity="0.5"/><rect x="9" y="30" width="2" height="1" fill="#d4d4d4" fill-opacity="0.28"/><rect x="9" y="31" width="2" height="1" fill="#d4d4d4" fill-opacity="0.5"/><rect x="12" y="30" width="6" height="1" fill="#ce9178" fill-opacity="0.28"/><rect x="12" y="31" width="6" height="1" fill="#ce9178" fill-opacity="0.5"/><rect x="19" y="30" width="4" height="1" fill="#9cdcfe" fill-opacity="0.28"/><rect x="19" y="31" width="4" height="1" fill="#9cdcfe" fill-opacity="0.5"/><rect x="24" y="30" width="1" height="1" fill="#ce9178" fill-opacity="0.28"/><rect x="24" y="31" width="1" height="1" fill="#ce9178" fill-opacity="0.5"/><rect x="25" y="30" width="5" height="1" fill="#9cdcfe" fill-opacity="0.28"/><rect x="25" y="31" width="5" height="1" fill="#9cdcfe" fill-opacity="0.5"/><rect x="30" y="30" width="1" height="1" fill="#ce9178" fill-opacity="0.28"/><rect x="30" y="31" width="1" height="1" fill="#ce9178" fill-opacity="0.5"/><rect x="31" y="30" width="4" height="1" fill="#d7ba7d" fill-opacity="0.28"/><rect x="31" y="31" width="4" height="1" fill="#d7ba7d" fill-opacity="0.5"/><rect x="35" y="30" width="8" height="1" fill="#ce9178" fill-opacity="0.28"/><rect x="35" y="31" width="8" height="1" fill="#ce9178" fill-opacity="0.5"/><rect x="44" y="30" width="1" height="1" fill="#ce9178" fill-opacity="0.28"/><rect x="44" y="31" width="1" height="1" fill="#ce9178" fill-opacity="0.5"/><rect x="46" y="30" width="4" height="1" fill="#9cdcfe" fill-opacity="0.28"/><rect x="46" y="31" width="4" height="1" fill="#9cdcfe" fill-opacity="0.5"/><rect x="51" y="30" width="1" height="1" fill="#ce9178" fill-opacity="0.28"/><rect x="51" y="31" width="1" height="1" fill="#ce9178" fill-opacity="0.5"/><rect x="52" y="30" width="5" height="1" fill="#9cdcfe" fill-opacity="0.28"/><rect x="52" y="31" width="5" height="1" fill="#9cdcfe" fill-opacity="0.5"/><rect x="57" y="30" width="1" height="1" fill="#ce9178" fill-opacity="0.28"/><rect x="57" y="31" width="1" height="1" fill="#ce9178" fill-opacity="0.5"/><rect x="58" y="30" width="2" height="1" fill="#d7ba7d" fill-opacity="0.28"/><rect x="58" y="31" width="2" height="1" fill="#d7ba7d" fill-opacity="0.5"/><rect x="60" y="30" width="13" height="1" fill="#ce9178" fill-opacity="0.28"/><rect x="60" y="31" width="13" height="1" fill="#ce9178" fill-opacity="0.5"/><rect x="73" y="30" width="1" height="1" fill="#d4d4d4" fill-opacity="0.28"/><rect x="73" y="31" width="1" height="1" fill="#d4d4d4" fill-opacity="0.5"/><rect x="0" y="34" width="8" height="1" fill="#9cdcfe" fill-opacity="0.28"/><rect x="0" y="35" width="8" height="1" fill="#9cdcfe" fill-opacity="0.5"/><rect x="8" y="34" width="1" height="1" fill="#d4d4d4" fill-opacity="0.28"/><rect x="8" y="35" width="1" height="1" fill="#d4d4d4" fill-opacity="0.5"/><rect x="9" y="34" width="1" height="1" fill="#ce9178" fill-opacity="0.28"/><rect x="9" y="35" width="1" height="1" fill="#ce9178" fill-opacity="0.5"/><rect x="10" y="34" width="6" height="1" fill="#9cdcfe" fill-opacity="0.28"/><rect x="10" y="35" width="6" height="1" fill="#9cdcfe" fill-opacity="0.5"/><rect x="16" y="34" width="1" height="1" fill="#ce9178" fill-opacity="0.28"/><rect x="16" y="35" width="1" height="1" fill="#ce9178" fill-opacity="0.5"/><rect x="17" y="34" width="1" height="1" fill="#d4d4d4" fill-opacity="0.28"/><rect x="17" y="35" width="1" height="1" fill="#d4d4d4" fill-opacity="0.5"/><rect x="0" y="36" width="13" height="1" fill="#9cdcfe" fill-opacity="0.28"/><rect x="0" y="37" width="13" height="1" fill="#9cdcfe" fill-opacity="0.5"/><rect x="13" y="36" width="1" height="1" fill="#d4d4d4" fill-opacity="0.28"/><rect x="13" y="37" width="1" height="1" fill="#d4d4d4" fill-opacity="0.5"/><rect x="14" y="36" width="21" height="1" fill="#ce9178" fill-opacity="0.28"/><rect x="14" y="37" width="21" height="1" fill="#ce9178" fill-opacity="0.5"/><rect x="35" y="36" width="1" height="1" fill="#d4d4d4" fill-opacity="0.28"/><rect x="35" y="37" width="1" height="1" fill="#d4d4d4" fill-opacity="0.5"/><rect x="37" y="36" width="11" height="1" fill="#6a9955" fill-opacity="0.28"/><rect x="37" y="37" width="11" height="1" fill="#6a9955" fill-opacity="0.5"/><rect x="49" y="36" width="26" height="1" fill="#6a9955" fill-opacity="0.28"/><rect x="49" y="37" width="26" height="1" fill="#6a9955" fill-opacity="0.5"/><rect x="76" y="36" width="3" height="1" fill="#6a9955" fill-opacity="0.28"/><rect x="76" y="37" width="3" height="1" fill="#6a9955" fill-opacity="0.5"/><rect x="80" y="36" width="5" height="1" fill="#6a9955" fill-opacity="0.28"/><rect x="80" y="37" width="5" height="1" fill="#6a9955" fill-opacity="0.5"/><rect x="86" y="36" width="7" height="1" fill="#6a9955" fill-opacity="0.28"/><rect x="86" y="37" width="7" height="1" fill="#6a9955" fill-opacity="0.5"/><rect x="94" y="36" width="6" height="1" fill="#6a9955" fill-opacity="0.28"/><rect x="94" y="37" width="6" height="1" fill="#6a9955" fill-opacity="0.5"/><rect x="0" y="38" width="5" height="1" fill="#9cdcfe" fill-opacity="0.28"/><rect x="0" y="39" width="5" height="1" fill="#9cdcfe" fill-opacity="0.5"/><rect x="5" y="38" width="1" height="1" fill="#d4d4d4" fill-opacity="0.28"/><rect x="5" y="39" width="1" height="1" fill="#d4d4d4" fill-opacity="0.5"/><rect x="6" y="38" width="1" height="1" fill="#ce9178" fill-opacity="0.28"/><rect x="6" y="39" width="1" height="1" fill="#ce9178" fill-opacity="0.5"/><rect x="7" y="38" width="8" height="1" fill="#9cdcfe" fill-opacity="0.28"/><rect x="7" y="39" width="8" height="1" fill="#9cdcfe" fill-opacity="0.5"/><rect x="15" y="38" width="1" height="1" fill="#ce9178" fill-opacity="0.28"/><rect x="15" y="39" width="1" height="1" fill="#ce9178" fill-opacity="0.5"/><rect x="16" y="38" width="1" height="1" fill="#d4d4d4" fill-opacity="0.28"/><rect x="16" y="39" width="1" height="1" fill="#d4d4d4" fill-opacity="0.5"/><rect x="0" y="40" width="2" height="1" fill="#c586c0" fill-opacity="0.28"/><rect x="0" y="41" width="2" height="1" fill="#c586c0" fill-opacity="0.5"/><rect x="3" y="40" width="1" height="1" fill="#d4d4d4" fill-opacity="0.28"/><rect x="3" y="41" width="1" height="1" fill="#d4d4d4" fill-opacity="0.5"/><rect x="4" y="40" width="4" height="1" fill="#dcdcaa" fill-opacity="0.28"/><rect x="4" y="41" width="4" height="1" fill="#dcdcaa" fill-opacity="0.5"/><rect x="8" y="40" width="1" height="1" fill="#d4d4d4" fill-opacity="0.28"/><rect x="8" y="41" width="1" height="1" fill="#d4d4d4" fill-opacity="0.5"/><rect x="9" y="40" width="13" height="1" fill="#9cdcfe" fill-opacity="0.28"/><rect x="9" y="41" width="13" height="1" fill="#9cdcfe" fill-opacity="0.5"/><rect x="22" y="40" width="1" height="1" fill="#d4d4d4" fill-opacity="0.28"/><rect x="22" y="41" width="1" height="1" fill="#d4d4d4" fill-opacity="0.5"/><rect x="23" y="40" width="8" height="1" fill="#9cdcfe" fill-opacity="0.28"/><rect x="23" y="41" width="8" height="1" fill="#9cdcfe" fill-opacity="0.5"/><rect x="31" y="40" width="1" height="1" fill="#d4d4d4" fill-opacity="0.28"/><rect x="31" y="41" width="1" height="1" fill="#d4d4d4" fill-opacity="0.5"/><rect x="32" y="40" width="5" height="1" fill="#9cdcfe" fill-opacity="0.28"/><rect x="32" y="41" width="5" height="1" fill="#9cdcfe" fill-opacity="0.5"/><rect x="37" y="40" width="1" height="1" fill="#d4d4d4" fill-opacity="0.28"/><rect x="37" y="41" width="1" height="1" fill="#d4d4d4" fill-opacity="0.5"/><rect x="38" y="40" width="8" height="1" fill="#9cdcfe" fill-opacity="0.28"/><rect x="38" y="41" width="8" height="1" fill="#9cdcfe" fill-opacity="0.5"/><rect x="46" y="40" width="2" height="1" fill="#d4d4d4" fill-opacity="0.28"/><rect x="46" y="41" width="2" height="1" fill="#d4d4d4" fill-opacity="0.5"/><rect x="49" y="40" width="1" height="1" fill="#d4d4d4" fill-opacity="0.28"/><rect x="49" y="41" width="1" height="1" fill="#d4d4d4" fill-opacity="0.5"/><rect x="0" y="42" width="4" height="1" fill="#dcdcaa" fill-opacity="0.28"/><rect x="0" y="43" width="4" height="1" fill="#dcdcaa" fill-opacity="0.5"/><rect x="5" y="42" width="6" height="1" fill="#ce9178" fill-opacity="0.28"/><rect x="5" y="43" width="6" height="1" fill="#ce9178" fill-opacity="0.5"/><rect x="12" y="42" width="4" height="1" fill="#ce9178" fill-opacity="0.28"/><rect x="12" y="43" width="4" height="1" fill="#ce9178" fill-opacity="0.5"/><rect x="17" y="42" width="1" height="1" fill="#ce9178" fill-opacity="0.28"/><rect x="17" y="43" width="1" height="1" fill="#ce9178" fill-opacity="0.5"/><rect x="19" y="42" width="3" height="1" fill="#ce9178" fill-opacity="0.28"/><rect x="19" y="43" width="3" height="1" fill="#ce9178" fill-opacity="0.5"/><rect x="23" y="42" width="11" height="1" fill="#ce9178" fill-opacity="0.28"/><rect x="23" y="43" width="11" height="1" fill="#ce9178" fill-opacity="0.5"/><rect x="34" y="42" width="1" height="1" fill="#d4d4d4" fill-opacity="0.28"/><rect x="34" y="43" width="1" height="1" fill="#d4d4d4" fill-opacity="0.5"/><rect x="0" y="44" width="1" height="1" fill="#d4d4d4" fill-opacity="0.28"/><rect x="0" y="45" width="1" height="1" fill="#d4d4d4" fill-opacity="0.5"/><rect x="2" y="44" width="4" height="1" fill="#c586c0" fill-opacity="0.28"/><rect x="2" y="45" width="4" height="1" fill="#c586c0" fill-opacity="0.5"/><rect x="7" y="44" width="1" height="1" fill="#d4d4d4" fill-opacity="0.28"/><rect x="7" y="45" width="1" height="1" fill="#d4d4d4" fill-opacity="0.5"/><rect x="0" y="46" width="4" height="1" fill="#dcdcaa" fill-opacity="0.28"/><rect x="0" y="47" width="4" height="1" fill="#dcdcaa" fill-opacity="0.5"/><rect x="5" y="46" width="4" height="1" fill="#ce9178" fill-opacity="0.28"/><rect x="5" y="47" width="4" height="1" fill="#ce9178" fill-opacity="0.5"/><rect x="10" y="46" width="6" height="1" fill="#ce9178" fill-opacity="0.28"/><rect x="10" y="47" width="6" height="1" fill="#ce9178" fill-opacity="0.5"/><rect x="17" y="46" width="5" height="1" fill="#ce9178" fill-opacity="0.28"/><rect x="17" y="47" width="5" height="1" fill="#ce9178" fill-opacity="0.5"/><rect x="23" y="46" width="9" height="1" fill="#ce9178" fill-opacity="0.28"/><rect x="23" y="47" width="9" height="1" fill="#ce9178" fill-opacity="0.5"/><rect x="32" y="46" width="1" height="1" fill="#d4d4d4" fill-opacity="0.28"/><rect x="32" y="47" width="1" height="1" fill="#d4d4d4" fill-opacity="0.5"/><rect x="0" y="48" width="1" height="1" fill="#d4d4d4" fill-opacity="0.28"/><rect x="0" y="49" width="1" height="1" fill="#d4d4d4" fill-opacity="0.5"/><rect x="0" y="50" width="2" height="1" fill="#569cd6" fill-opacity="0.28"/><rect x="0" y="51" width="2" height="1" fill="#569cd6" fill-opacity="0.5"/><rect x="0" y="52" width="1" height="1" fill="#808080" fill-opacity="0.28"/><rect x="0" y="53" width="1" height="1" fill="#808080" fill-opacity="0.5"/><rect x="1" y="52" width="1" height="1" fill="#569cd6" fill-opacity="0.28"/><rect x="1" y="53" width="1" height="1" fill="#569cd6" fill-opacity="0.5"/><rect x="3" y="52" width="5" height="1" fill="#f44747" fill-opacity="0.28"/><rect x="3" y="53" width="5" height="1" fill="#f44747" fill-opacity="0.5"/><rect x="8" y="52" width="1" height="1" fill="#d4d4d4" fill-opacity="0.28"/><rect x="8" y="53" width="1" height="1" fill="#d4d4d4" fill-opacity="0.5"/><rect x="9" y="52" width="8" height="1" fill="#ce9178" fill-opacity="0.28"/><rect x="9" y="53" width="8" height="1" fill="#ce9178" fill-opacity="0.5"/><rect x="17" y="52" width="1" height="1" fill="#808080" fill-opacity="0.28"/><rect x="17" y="53" width="1" height="1" fill="#808080" fill-opacity="0.5"/><rect x="18" y="52" width="4" height="1" fill="#d4d4d4" fill-opacity="0.28"/><rect x="18" y="53" width="4" height="1" fill="#d4d4d4" fill-opacity="0.5"/><rect x="23" y="52" width="5" height="1" fill="#d4d4d4" fill-opacity="0.28"/><rect x="23" y="53" width="5" height="1" fill="#d4d4d4" fill-opacity="0.5"/><rect x="29" y="52" width="7" height="1" fill="#d4d4d4" fill-opacity="0.28"/><rect x="29" y="53" width="7" height="1" fill="#d4d4d4" fill-opacity="0.5"/><rect x="37" y="52" width="4" height="1" fill="#d4d4d4" fill-opacity="0.28"/><rect x="37" y="53" width="4" height="1" fill="#d4d4d4" fill-opacity="0.5"/><rect x="42" y="52" width="8" height="1" fill="#d4d4d4" fill-opacity="0.28"/><rect x="42" y="53" width="8" height="1" fill="#d4d4d4" fill-opacity="0.5"/><rect x="51" y="52" width="4" height="1" fill="#d4d4d4" fill-opacity="0.28"/><rect x="51" y="53" width="4" height="1" fill="#d4d4d4" fill-opacity="0.5"/><rect x="56" y="52" width="2" height="1" fill="#d4d4d4" fill-opacity="0.28"/><rect x="56" y="53" width="2" height="1" fill="#d4d4d4" fill-opacity="0.5"/><rect x="59" y="52" width="4" height="1" fill="#d4d4d4" fill-opacity="0.28"/><rect x="59" y="53" width="4" height="1" fill="#d4d4d4" fill-opacity="0.5"/><rect x="64" y="52" width="9" height="1" fill="#d4d4d4" fill-opacity="0.28"/><rect x="64" y="53" width="9" height="1" fill="#d4d4d4" fill-opacity="0.5"/><rect x="73" y="52" width="1" height="1" fill="#808080" fill-opacity="0.28"/><rect x="73" y="53" width="1" height="1" fill="#808080" fill-opacity="0.5"/><rect x="74" y="52" width="2" height="1" fill="#569cd6" fill-opacity="0.28"/><rect x="74" y="53" width="2" height="1" fill="#569cd6" fill-opacity="0.5"/><rect x="76" y="52" width="1" height="1" fill="#808080" fill-opacity="0.28"/><rect x="76" y="53" width="1" height="1" fill="#808080" fill-opacity="0.5"/><rect x="0" y="54" width="2" height="1" fill="#d4d4d4" fill-opacity="0.28"/><rect x="0" y="55" width="2" height="1" fill="#d4d4d4" fill-opacity="0.5"/><rect x="3" y="54" width="4" height="1" fill="#d4d4d4" fill-opacity="0.28"/><rect x="3" y="55" width="4" height="1" fill="#d4d4d4" fill-opacity="0.5"/><rect x="8" y="54" width="6" height="1" fill="#d4d4d4" fill-opacity="0.28"/><rect x="8" y="55" width="6" height="1" fill="#d4d4d4" fill-opacity="0.5"/><rect x="15" y="54" width="3" height="1" fill="#d4d4d4" fill-opacity="0.28"/><rect x="15" y="55" width="3" height="1" fill="#d4d4d4" fill-opacity="0.5"/><rect x="19" y="54" width="8" height="1" fill="#d4d4d4" fill-opacity="0.28"/><rect x="19" y="55" width="8" height="1" fill="#d4d4d4" fill-opacity="0.5"/><rect x="28" y="54" width="2" height="1" fill="#d4d4d4" fill-opacity="0.28"/><rect x="28" y="55" width="2" height="1" fill="#d4d4d4" fill-opacity="0.5"/><rect x="31" y="54" width="4" height="1" fill="#d4d4d4" fill-opacity="0.28"/><rect x="31" y="55" width="4" height="1" fill="#d4d4d4" fill-opacity="0.5"/><rect x="36" y="54" width="2" height="1" fill="#d4d4d4" fill-opacity="0.28"/><rect x="36" y="55" width="2" height="1" fill="#d4d4d4" fill-opacity="0.5"/><rect x="39" y="54" width="1" height="1" fill="#d4d4d4" fill-opacity="0.28"/><rect x="39" y="55" width="1" height="1" fill="#d4d4d4" fill-opacity="0.5"/><rect x="41" y="54" width="8" height="1" fill="#d4d4d4" fill-opacity="0.28"/><rect x="41" y="55" width="8" height="1" fill="#d4d4d4" fill-opacity="0.5"/><rect x="50" y="54" width="7" height="1" fill="#d4d4d4" fill-opacity="0.28"/><rect x="50" y="55" width="7" height="1" fill="#d4d4d4" fill-opacity="0.5"/><rect x="58" y="54" width="3" height="1" fill="#d4d4d4" fill-opacity="0.28"/><rect x="58" y="55" width="3" height="1" fill="#d4d4d4" fill-opacity="0.5"/><rect x="61" y="54" width="1" height="1" fill="#808080" fill-opacity="0.28"/><rect x="61" y="55" width="1" height="1" fill="#808080" fill-opacity="0.5"/><rect x="62" y="54" width="1" height="1" fill="#569cd6" fill-opacity="0.28"/><rect x="62" y="55" width="1" height="1" fill="#569cd6" fill-opacity="0.5"/><rect x="64" y="54" width="4" height="1" fill="#9cdcfe" fill-opacity="0.28"/><rect x="64" y="55" width="4" height="1" fill="#9cdcfe" fill-opacity="0.5"/><rect x="68" y="54" width="1" height="1" fill="#d4d4d4" fill-opacity="0.28"/><rect x="68" y="55" width="1" height="1" fill="#d4d4d4" fill-opacity="0.5"/><rect x="69" y="54" width="1" height="1" fill="#ce9178" fill-opacity="0.28"/><rect x="69" y="55" width="1" height="1" fill="#ce9178" fill-opacity="0.5"/><rect x="70" y="54" width="35" height="1" fill="#ce9178" fill-opacity="0.28"/><rect x="70" y="55" width="35" height="1" fill="#ce9178" fill-opacity="0.5"/><rect x="0" y="56" width="8" height="1" fill="#ce9178" fill-opacity="0.28"/><rect x="0" y="57" width="8" height="1" fill="#ce9178" fill-opacity="0.5"/></svg>
</body></html>
